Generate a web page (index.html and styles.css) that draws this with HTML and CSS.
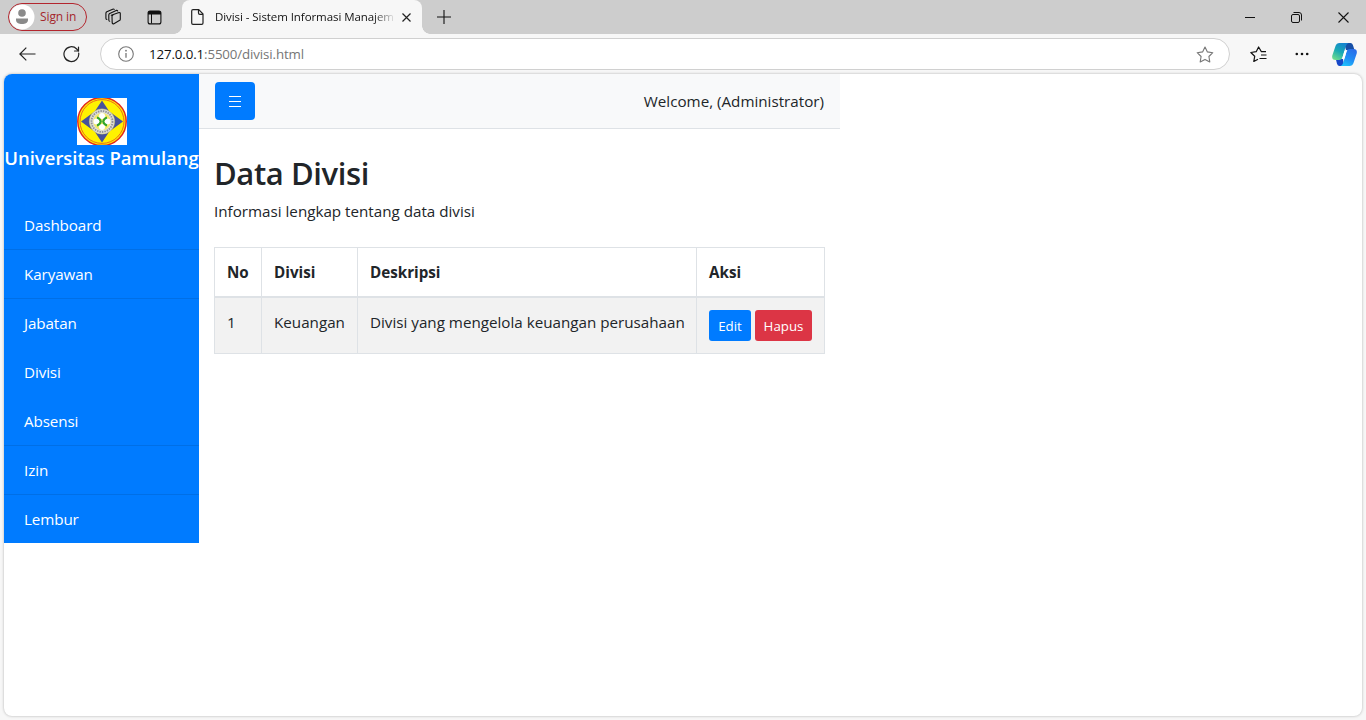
FILE: index.html
```html
<!DOCTYPE html>
<html lang="id">
<head>
<meta charset="utf-8">
<title>Divisi - Sistem Informasi Manajemen</title>
<link rel="stylesheet" href="styles.css">
</head>
<body>
<header class="tabstrip">
  <div class="profile">
    <svg width="26" height="26" viewBox="0 0 26 26"><circle cx="13" cy="13" r="12.5" fill="#fff"/><circle cx="13" cy="9" r="3.8" fill="#8a8a8a"/><path d="M7 14.5h12v1.3c0 3-2.700 4.200-6 4.200s-6-1.200-6-4.200z" fill="#8a8a8a"/></svg>
    <span class="signin">Sign in</span>
  </div>
  <svg class="workspaces" width="18" height="18" viewBox="0 0 18 18" fill="none" stroke="#111" stroke-width="1.100" stroke-linejoin="round" stroke-linecap="round"><path d="M7.200 7.300 15 4.600q1.300-.3 1.300 1v5.600q0 1-1 1.400l-5.400 3.100q-1.500.6-1.700-.8l-.2-6.300q0-1 1-1.500z"/><path d="M5.700 13.200q-.9 0-.9-1.200V6.900q0-1 .9-1.500l6.500-3q1.100-.3 1.500.6"/><path d="M2.800 11.400q-.9 0-.9-1.200V5.300q0-1 .9-1.500l5.900-2.600q1-.4 1.500.2"/></svg>
  <svg class="tabmenu" width="15" height="15" viewBox="0 0 15 15"><rect x="1.100" y="1.100" width="12.800" height="12.800" rx="2" fill="none" stroke="#111" stroke-width="1.100"/><path d="M1 4V3q0-2 2-2h9q2 0 2 2v1.500H1z" fill="#111"/><path d="M4.500 4v9.500" stroke="#111"/></svg>
  <div class="tab">
    <svg width="13" height="16" viewBox="0 0 13 16" fill="none" stroke="#222" stroke-width="1.200" stroke-linejoin="round"><path d="M2 .7h5.800L12 5v9q0 1.300-1.300 1.300H2Q.7 15.300.7 14V2Q.7.7 2 .7z"/><path d="M7.500.8V4q0 1.300 1.300 1.300H12"/></svg>
    <span class="tab-title">Divisi - Sistem Informasi Manajem</span>
    <svg class="tab-close" width="9" height="9" viewBox="0 0 9 9" stroke="#222" stroke-width="1.200"><path d="M.5.500l8 8M8.500.500l-8 8"/></svg>
  </div>
  <svg class="newtab" width="14" height="14" viewBox="0 0 14 14" stroke="#111" stroke-width="1.100"><path d="M7 0v14M0 7h14"/></svg>
  <div class="window-controls">
    <svg width="10" height="11" viewBox="0 0 10 11"><path d="M0 5.500h10" stroke="#111"/></svg>
    <svg width="11" height="11" viewBox="0 0 11 11" fill="none" stroke="#111"><rect x=".5" y="2.500" width="8" height="8" rx="1.500"/><path d="M2.500.500h5.500q2.500 0 2.500 2.500v5.500"/></svg>
    <svg width="11" height="11" viewBox="0 0 11 11" stroke="#111" stroke-width="1.100"><path d="M.5.500l10 10M10.500.500l-10 10"/></svg>
  </div>
</header>
<div class="toolbar">
  <svg class="back" width="17" height="14" viewBox="0 0 17 14" fill="none" stroke="#222" stroke-width="1.200"><path d="M16.500 7H1M7.300.600.900 7l6.400 6.400"/></svg>
  <svg class="reload" width="17" height="17" viewBox="0 0 17 17" fill="none" stroke="#222" stroke-width="1.200" stroke-linecap="round"><path d="M15.700 7.100A7.400 7.400 0 1 1 13.700 3l1.700 1.800"/><path d="M15.500 1v4h-4"/></svg>
  <div class="address">
    <svg width="16" height="16" viewBox="0 0 16 16"><circle cx="8" cy="8" r="7.300" fill="none" stroke="#777" stroke-width="1.100"/><path d="M8 7v4.700" stroke="#777" stroke-width="1.300"/><circle cx="8" cy="4.700" r=".9" fill="#777"/></svg>
    <span class="url"><span class="host">127.0.0.1</span>:5500/divisi.html</span>
    <svg class="star" width="18" height="17" viewBox="0 0 18 17" fill="none" stroke="#777" stroke-width="1.100" stroke-linejoin="round"><path d="M9 1l2.400 4.900 5.400.8-3.900 3.800.9 5.400L9 13.400l-4.800 2.500.9-5.400L1.200 6.700l5.400-.8z"/></svg>
  </div>
  <svg class="favorites" width="17" height="17" viewBox="0 0 17 17" fill="none" stroke="#111" stroke-width="1.200" stroke-linejoin="round"><path d="M16 5.700h-4.600L8.600 1 6.200 5.700l-5.400.8 3.900 3.800-.9 5.200 4.200-2.300"/><path d="M11 9H16.500M9.500 12.500H16.500"/></svg>
  <svg class="more" width="14" height="4" viewBox="0 0 14 4" fill="#111"><circle cx="1.800" cy="2" r="1.300"/><circle cx="7" cy="2" r="1.300"/><circle cx="12.200" cy="2" r="1.300"/></svg>
  <svg class="copilot" width="25" height="23" viewBox="0 0 25 23">
    <defs>
      <linearGradient id="teal" x1=".7" y1="0" x2=".2" y2="1"><stop offset="0" stop-color="#1683d0"/><stop offset=".5" stop-color="#18a9b4"/><stop offset="1" stop-color="#6fdc8c"/></linearGradient>
      <linearGradient id="azure" x1=".8" y1="0" x2=".3" y2="1"><stop offset="0" stop-color="#2a6be8"/><stop offset=".6" stop-color="#2090f5"/><stop offset="1" stop-color="#1fc0fb"/></linearGradient>
    </defs>
    <path d="M12 0h6.500q1.800 0 2.400 2l1.600 5H14z" fill="#174fa6"/>
    <path d="M12 23H7.500q-1.800 0-2.400-2l-1.300-5H11z" fill="#1748c8"/>
    <path d="M3.500 3Q4.500 0 7.500 0h9Q14.500.600 13.700 3.500L10.600 14q-.8 3-3.600 3H3.500Q-.6 17 .3 12.500z" fill="url(#teal)"/>
    <path d="M21.500 20Q20.500 23 17.500 23H8.500q2-.6 2.800-3.500L14.400 9q.8-3 3.600-3h3.500q4.100 0 3.200 4.500z" fill="url(#azure)"/>
    <path d="M12.400 8h2.300l-2.200 7.500h-2.300z" fill="#fff"/>
  </svg>
</div>
<div class="viewport">
  <aside class="sidebar">
    <div class="brand">
      <svg width="50" height="47" viewBox="0 0 50 47">
        <rect width="50" height="47" fill="#fff"/>
        <ellipse cx="25" cy="23.500" rx="24.200" ry="24" fill="#fff200" stroke="#e3271e" stroke-width="1.500"/>
        <ellipse cx="25" cy="23.500" rx="22" ry="21.900" fill="none" stroke="#ea5a20" stroke-width=".9"/>
        <path d="M25 2.500l7 10.500 4.500 3.500L46 23.500l-9.500 7L32 34l-7 10.500L18 34l-4.500-3.500L4 23.500l9.500-7L18 13z" fill="#47529b"/>
        <circle cx="25" cy="23.500" r="12.600" fill="#dedede" stroke="#d8d06a" stroke-width=".6"/>
        <circle cx="25" cy="23.500" r="10.500" fill="none" stroke="#929292" stroke-width="1.800" stroke-dasharray="1.500 1"/>
        <circle cx="25" cy="23.500" r="8.700" fill="#f3e96c"/>
        <g fill="#fff"><circle cx="25" cy="18" r="3"/><circle cx="25" cy="29" r="3"/><circle cx="19.500" cy="23.500" r="3"/><circle cx="30.500" cy="23.500" r="3"/></g>
        <path d="M20 19.500q3 .8 3.800 4-.8 3.200-3.800 4M30 19.500q-3 .8-3.800 4 .8 3.200 3.800 4" fill="none" stroke="#31a52d" stroke-width="2"/>
      </svg>
      <div class="brand-name">Universitas Pamulang</div>
    </div>
    <nav class="menu">
      <a class="item">Dashboard</a>
      <a class="item">Karyawan</a>
      <a class="item plain">Jabatan</a>
      <a class="item plain">Divisi</a>
      <a class="item">Absensi</a>
      <a class="item">Izin</a>
      <a class="item last">Lembur</a>
    </nav>
  </aside>
  <main class="content">
    <div class="navbar">
      <button class="toggle"><svg width="12" height="11" viewBox="0 0 12 11" stroke="#fff" stroke-width="1"><path d="M0 .500h12M0 5.500h12M0 10.500h12"/></svg></button>
      <span class="welcome">Welcome, (Administrator)</span>
    </div>
    <div class="page">
      <h1 class="title">Data Divisi</h1>
      <p class="lead">Informasi lengkap tentang data divisi</p>
      <table class="table">
        <colgroup><col class="c-no"><col class="c-div"><col class="c-desc"><col class="c-act"></colgroup>
        <thead><tr><th>No</th><th>Divisi</th><th>Deskripsi</th><th>Aksi</th></tr></thead>
        <tbody><tr><td>1</td><td>Keuangan</td><td class="desc">Divisi yang mengelola keuangan perusahaan</td><td><div class="actions"><button class="btn edit">Edit</button><button class="btn delete">Hapus</button></div></td></tr></tbody>
      </table>
    </div>
  </main>
</div>
</body>
</html>
```
FILE: styles.css
```css
* { box-sizing: border-box; }
body {
  margin: 0;
  height: 720px;
  overflow: hidden;
  display: flex;
  flex-direction: column;
  background: #f7f7f7;
  color: #212529;
  font: 15.2px/24px "Open Sans", "Noto Sans", sans-serif;
}
svg { display: block; flex: none; }
button { font-family: inherit; border: 0; padding: 0; color: #fff; }

.tabstrip { height: 34px; flex: none; display: flex; align-items: center; background: #cdcdcd; }
.profile {
  width: 79px; height: 28px; margin-left: 8px;
  display: flex; align-items: center; gap: 5px;
  border: 1px solid #b3262e; border-radius: 14px;
  color: #a4262c; font-size: 12px; white-space: nowrap;
}
.signin { letter-spacing: -.1px; }
.workspaces { margin-left: 17px; }
.tabmenu { margin-left: 25px; }
.tab {
  position: relative;
  width: 240px; height: 34px; margin-left: 20px; padding-left: 9px;
  display: flex; align-items: center;
  background: #f7f7f7; border-radius: 8px 8px 0 0;
}
.tab::before, .tab::after { content: ""; position: absolute; bottom: 0; width: 8px; height: 8px; }
.tab::before { left: -8px; background: radial-gradient(circle at 0 0, #cdcdcd 7.5px, #f7f7f7 8px); }
.tab::after { right: -8px; background: radial-gradient(circle at 100% 0, #cdcdcd 7.5px, #f7f7f7 8px); }
.tab-title {
  width: 179px; margin-left: 11px; white-space: nowrap;
  color: #111; font-size: 11.5px; letter-spacing: -.07px;
  -webkit-mask-image: linear-gradient(90deg, #000 158px, transparent 181px);
  mask-image: linear-gradient(90deg, #000 158px, transparent 181px);
}
.tab-close { margin-left: 8px; }
.newtab { margin-left: 15px; }
.window-controls { margin-left: auto; margin-right: 17px; display: flex; gap: 36px; }

.toolbar { height: 40px; flex: none; display: flex; align-items: center; }
.back { margin-left: 19px; }
.reload { margin-left: 27px; }
.address {
  width: 1130px; height: 32px; margin-left: 20px; padding: 0 15px 0 17px;
  display: flex; align-items: center;
  background: #fff; border: 1px solid #d0d0d0; border-radius: 16px;
}
.url { margin-left: 15px; font-size: 13.3px; color: #767676; letter-spacing: -.12px; }
.host { color: #111; }
.star { margin-left: auto; }
.favorites { margin-left: 20px; }
.more { margin-left: 28px; }
.copilot { margin-left: 23px; }

.viewport {
  width: 1358px; height: 642px; margin-left: 4px; flex: none;
  display: flex; align-items: flex-start; overflow: hidden;
  background: #fff; border-radius: 8px;
  box-shadow: 0 0 3px rgba(0, 0, 0, .28);
}
.sidebar { width: 195px; background: #007bff; color: #fff; }
.brand { height: 127px; padding-top: 24px; display: flex; flex-direction: column; align-items: center; }
.brand svg { margin-left: 1px; }
.brand-name { font-size: 18.5px; font-weight: 600; line-height: 26px; white-space: nowrap; }
.menu { display: flex; flex-direction: column; }
.item { height: 49px; padding: 12px 20px; border-bottom: 1px solid #006fe6; letter-spacing: -.1px; }
.plain { border-bottom-color: transparent; }
.last { height: 48px; border-bottom: 0; }

.content { width: 641px; }
.navbar {
  height: 55px; padding: 0 16px;
  display: flex; align-items: center; justify-content: space-between;
  background: #f8f9fa; border-bottom: 1px solid #dee2e6;
}
.toggle {
  width: 40px; height: 38px; display: flex; align-items: center; justify-content: center;
  background: #007bff; border-radius: 4px;
}
.page { padding: 25px 15px 0; }
.title { margin: 0 0 7px; font-size: 31px; font-weight: 600; line-height: 38px; letter-spacing: -.4px; }
.lead { margin: 0 0 24px; }
.table { width: 611px; table-layout: fixed; border-collapse: collapse; }
.c-no { width: 47px; }
.c-div { width: 96px; }
.c-desc { width: 339px; }
.c-act { width: 128px; }
.table th, .table td {
  padding: 12px 0 0 12px; border: 1px solid #dee2e6;
  text-align: left; vertical-align: top; white-space: nowrap;
}
.table th { height: 49px; border-bottom-width: 2px; font-weight: 700; }
.table td { height: 57px; background: #f2f2f2; }
.actions { display: flex; gap: 4px; }
.btn { height: 31px; padding-top: 1px; border-radius: 3px; font-size: 13.3px; }
.edit { width: 42px; background: #007bff; }
.delete { width: 57px; background: #dc3545; }
```
